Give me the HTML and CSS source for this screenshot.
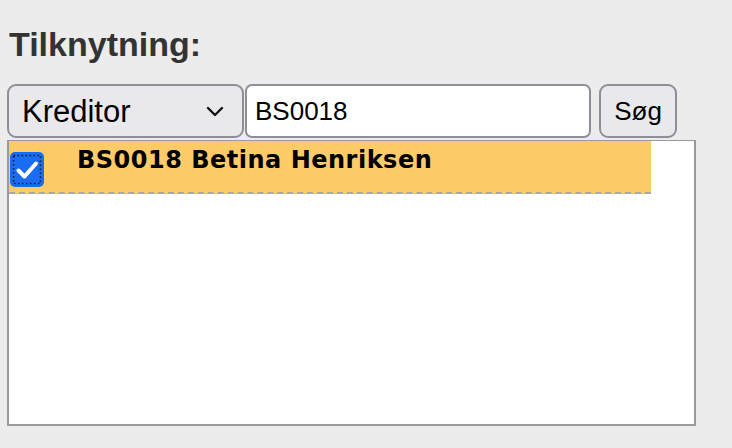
FILE: index.html
```html
<!DOCTYPE html>
<html lang="da">
<head>
<meta charset="utf-8">
<title>Tilknytning</title>
<link rel="stylesheet" href="styles.css">
</head>
<body>
<div class="panel">
  <h2 class="title">Tilknytning:</h2>
  <div class="search-row">
    <div class="select-wrap">
      <select class="select">
        <option>Kreditor</option>
      </select>
      <svg class="chevron" width="18" height="11" viewBox="0 0 18 11"><path d="M2 2 L9 9 L16 2" fill="none" stroke="#111" stroke-width="2.4" stroke-linecap="round" stroke-linejoin="round"/></svg>
    </div>
    <input class="text-input" type="text" value="BS0018">
    <button class="btn">Søg</button>
  </div>
  <div class="listbox">
    <div class="row">
      <span class="check">
        <svg width="34" height="35" viewBox="0 0 34 35">
          <rect x="0" y="0" width="34" height="35" rx="5" fill="#1a6cf2"/>
          <rect x="3.5" y="3.5" width="27" height="28" fill="none" stroke="#0b1a33" stroke-width="1.6" stroke-dasharray="1.6 2.4"/>
          <path d="M8.5 18.5 L14.5 24.5 L26 11.5" fill="none" stroke="#fff" stroke-width="4" stroke-linecap="round" stroke-linejoin="round"/>
        </svg>
      </span>
      <span class="name">BS0018 Betina Henriksen</span>
    </div>
  </div>
</div>
</body>
</html>
```
FILE: styles.css
```css
html, body {
  margin: 0;
  padding: 0;
  background: #ececec;
}
.panel {
  padding: 20px 0 0 7px;
  font-family: "Liberation Sans", Arial, sans-serif;
}
.title {
  margin: 0 0 0 2px;
  font-family: "Liberation Sans", Arial, sans-serif;
  font-size: 34px;
  font-weight: bold;
  color: #333;
  line-height: 48px;
  height: 64px;
}
.search-row {
  display: flex;
  align-items: flex-start;
  height: 56px;
}
.select-wrap {
  position: relative;
  width: 237px;
  height: 54px;
}
.select {
  appearance: none;
  -webkit-appearance: none;
  width: 237px;
  height: 54px;
  margin: 0;
  padding: 0 0 0 13px;
  border: 2px solid #8f8f95;
  border-radius: 9px;
  background: #e9e9ed;
  font-family: "Liberation Sans", Arial, sans-serif;
  font-size: 31px;
  color: #000;
  box-sizing: border-box;
}
.chevron {
  position: absolute;
  left: 199px;
  top: 22px;
  pointer-events: none;
}
.text-input {
  margin: 0 0 0 1px;
  width: 346px;
  height: 54px;
  box-sizing: border-box;
  border: 2px solid #8f8f95;
  border-radius: 7px;
  background: #fff;
  padding: 0 0 0 8px;
  font-family: "Liberation Sans", Arial, sans-serif;
  font-size: 26px;
  color: #000;
}
.btn {
  margin: 0 0 0 8px;
  width: 78px;
  height: 54px;
  box-sizing: border-box;
  border: 2px solid #8f8f95;
  border-radius: 9px;
  background: #e9e9ed;
  font-family: "Liberation Sans", Arial, sans-serif;
  font-size: 26px;
  color: #000;
  padding: 0;
}
.listbox {
  width: 689px;
  height: 286px;
  box-sizing: border-box;
  border: 2px solid #9a9a9a;
  border-top-width: 1px;
  background: #fff;
}
.row {
  display: flex;
  align-items: flex-start;
  width: 642px;
  height: 53px;
  box-sizing: border-box;
  background: #fecb69;
  border-bottom: 2px dashed #a9a9a9;
}
.check {
  display: block;
  margin: 11px 0 0 1px;
  width: 34px;
  height: 35px;
}
.check svg {
  display: block;
}
.name {
  margin: 3px 0 0 33px;
  font-family: "DejaVu Sans", Verdana, sans-serif;
  font-size: 24px;
  letter-spacing: 0.5px;
  font-weight: bold;
  color: #000;
  line-height: 32px;
}
```
